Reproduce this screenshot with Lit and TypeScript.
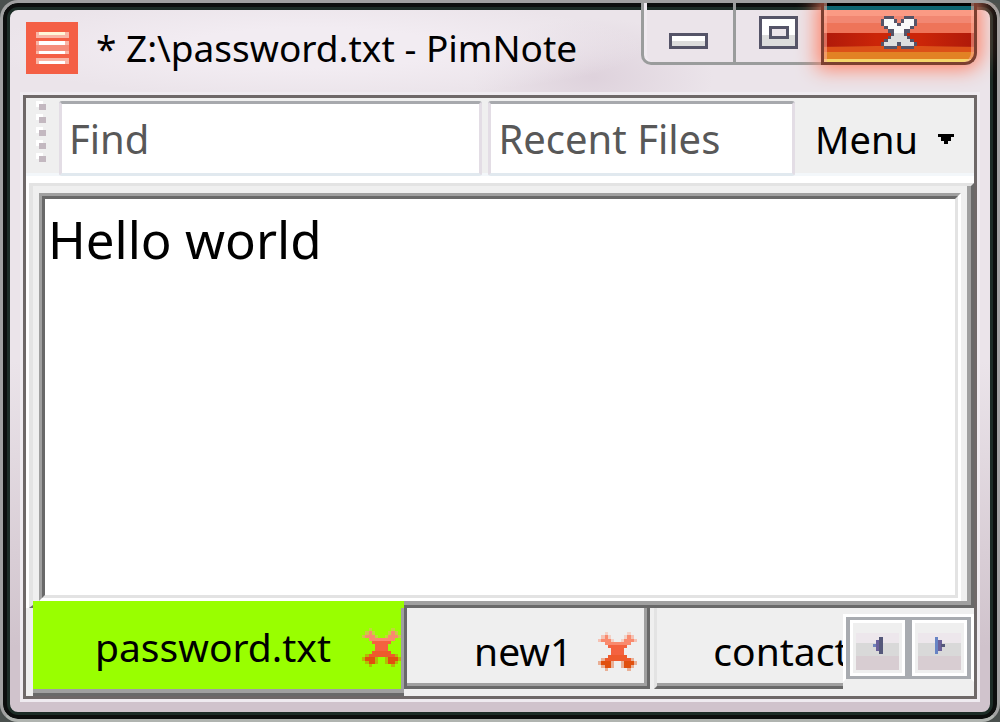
import { LitElement, html, css, svg } from "lit";
import { customElement, state } from "lit/decorators.js";

interface NoteTab {
  name: string;
  label: string;
}

/* Draws a pixel sprite: one character per cell, coloured through the palette. */
const sprite = (rows: string[], palette: Record<string, string>) =>
  rows.flatMap((row, y) =>
    [...row].map((cell, x) =>
      palette[cell] ? svg`<rect x=${x} y=${y} width="1" height="1" fill=${palette[cell]} />` : null,
    ),
  );

const tabCross = [
  "..f......f..",
  ".pPf....fPp.",
  "pPPPf..fPPPp",
  "..PPPPPPPP..",
  "...MMMMMM...",
  "....MMMM....",
  "....MMMM....",
  "...NNNNNN...",
  ".oNNNNNNNNo.",
  "oOOOo..oOOOo",
  ".oOOo..oOOo.",
  "..o......o..",
];
const tabCrossColours = {
  f: "#f9a68966",
  p: "#f99a8088",
  P: "#f98a6e",
  M: "#f4623f",
  N: "#ee5a2c",
  O: "#e0500f",
  o: "#e0501066",
};

const closeCross = [
  ".KKK...KKK.",
  "KWWWK.KWWWK",
  "KWWWWKWWWWK",
  ".KWWWWWWWK.",
  "..KKWWWKK..",
  "...KVVVK...",
  "..KVVVVVK..",
  ".KVVVVVVVK.",
  "KVVVVKVVVVK",
  ".KKKK.KKKK.",
];
const closeCrossColours = { K: "#555468", W: "#fafafa", V: "#dedede" };

@customElement("app-root")
export class AppRoot extends LitElement {
  @state() private active = 0;
  @state() private tabs: NoteTab[] = [
    { name: "password", label: "password.txt" },
    { name: "new1", label: "new1" },
    { name: "contact", label: "contact" },
  ];

  static styles = css`
    :host {
      display: block;
      background: #4a504e;
      font-family: "Noto Sans", "Open Sans", sans-serif;
      color: #000;
    }
    * {
      box-sizing: border-box;
    }
    button,
    input,
    textarea {
      font: inherit;
      color: inherit;
      border: 0;
      margin: 0;
      padding: 0;
      border-radius: 0;
      background: none;
      outline: none;
    }
    svg {
      display: block;
      flex: none;
    }
    .window {
      display: flex;
      flex-direction: column;
      height: 100vh;
      border: 3px solid #a0a0a0;
      border-bottom-color: #b0b4b0;
      border-radius: 18px;
      padding: 0 17px 16px;
      background:
        radial-gradient(ellipse 330px 50px at 310px 45px, #f2ecf2 0 40%, transparent 100%),
        radial-gradient(ellipse 120px 60px at 590px 75px, #ded2dc, transparent),
        linear-gradient(#ebe4ea 0 50%, #d0c3cc 90%);
      box-shadow: inset 0 0 0 4px #0c0e0d, inset 0 0 0 7px #1c2c26;
    }
    .titlebar {
      display: flex;
      align-items: flex-start;
      height: 88px;
      flex: none;
      padding-right: 3px;
    }
    .caption {
      display: flex;
      align-items: center;
      gap: 18px;
      flex: 1;
      min-width: 0;
      height: 90px;
      padding-left: 6px;
    }
    .title {
      margin: 0;
      font-size: 37px;
      line-height: 52px;
      font-weight: 400;
      white-space: nowrap;
    }
    .controls {
      display: flex;
      height: 62px;
    }
    .control {
      display: flex;
      justify-content: center;
      width: 92px;
      border: solid #9a9c9c;
      border-width: 0 0 3px 3px;
      box-shadow: inset 3px 0 #f0eaf0;
      background: linear-gradient(#0c0e0d 0 4px, #1c2c26 4px 7px, #ebe4ea 7px);
    }
    .control.min {
      border-radius: 0 0 0 10px;
      padding-top: 30px;
    }
    .control.max {
      width: 88px;
      padding-top: 13px;
      box-shadow: none;
    }
    .control.close {
      position: relative;
      width: 156px;
      border: 3px solid #7c3f30;
      border-top: 0;
      border-radius: 0 0 12px 0;
      padding-top: 13px;
      background:
        linear-gradient(90deg, #a8160acc, transparent 35% 65%, #a8160acc) 0 30px / 100% 14px no-repeat,
        linear-gradient(#000 0 3px, #0c6470 3px 7px, #fb9a84 7px 13px, #f28772 13px 20px, #ee7459 20px 30px, #cb2508 30px 43px, #dc5018 43px 49px, #e28224 49px 56px, #f4d46a 56px);
      box-shadow: inset 3px 0 #ffb4a288, inset -3px 0 #ffb4a288, 0 0 20px 4px #ff8064;
      clip-path: inset(0 -30px -30px -30px);
    }
    .client {
      display: flex;
      flex-direction: column;
      flex: 1;
      min-height: 0;
      border: 3px solid #6e6868;
      outline: 3px solid #efebf0;
      margin: 4px 3px;
      background: #efefef;
    }
    .toolbar {
      display: flex;
      align-items: stretch;
      height: 78px;
      flex: none;
      padding-top: 3px;
      box-shadow: inset 0 -3px #f3f7fa;
    }
    .grip {
      display: flex;
      flex-direction: column;
      gap: 7px;
      width: 33px;
      padding-left: 13px;
      padding-top: 3px;
    }
    .dot {
      width: 7px;
      height: 6px;
      background: #c3b8c0;
      box-shadow: -3px -3px #fff;
    }
    .field {
      height: 75px;
      padding: 0 0 0 7px;
      min-width: 0;
      font-size: 40px;
      border: 3px solid #e3dde5;
      border-top-color: #a7a9ad;
      border-bottom-color: #e1e9ef;
      border-radius: 3px;
      background: #fff;
    }
    .field::placeholder {
      color: #585858;
      opacity: 1;
    }
    .find {
      flex: 425;
      margin-right: 6px;
    }
    .recent {
      flex: 304;
    }
    .menu {
      display: flex;
      align-items: center;
      gap: 20px;
      flex: none;
      width: 179px;
      padding-left: 20px;
      font-size: 38px;
    }
    .pane {
      display: flex;
      flex: 1;
      min-height: 0;
      border: solid #e3e3e3;
      border-width: 3px 3px 3px 4px;
      border-right-color: #696969;
      border-bottom-color: #696969;
      margin-left: 3px;
      margin-top: 7px;
      padding: 7px 10px 4px 6px;
      box-shadow: 0 -7px #fff, -3px 0 #fff, -3px -7px #fff, inset -4px -4px #a0a0a0;
    }
    .bevel {
      display: flex;
      flex: 1;
      border: 3px solid #a0a0a0;
      border-right-color: #fff;
      border-bottom-color: #fff;
    }
    .text {
      flex: 1;
      resize: none;
      border: 3px solid #696969;
      border-right-color: #e3e3e3;
      border-bottom-color: #e3e3e3;
      background: #fff;
      padding: 4px 3px;
      font-size: 51px;
      line-height: 72px;
      overflow: hidden;
    }
    .tabs {
      display: flex;
      flex: none;
      height: 88px;
      padding-left: 7px;
    }
    .strip {
      display: flex;
      align-items: flex-start;
      flex: 1;
      min-width: 0;
      height: 95px;
      margin-top: -7px;
      padding-top: 7px;
      overflow: hidden;
    }
    .tab {
      display: flex;
      align-items: center;
      flex: none;
      height: 81px;
      font-size: 39px;
      line-height: 54px;
      padding: 8px 10px 0 67px;
      border: solid #696969;
      border-width: 0 3px 3px;
      box-shadow: inset -3px -3px #a0a0a0, -3px 0 #a0a0a0;
      margin-right: 7px;
      gap: 26px;
    }
    .tab:nth-child(n + 3) {
      border-left-color: #e3e3e3;
      padding-left: 56px;
      margin-left: -3px;
      box-shadow: inset -3px -3px #a0a0a0;
    }
    .tab.active {
      height: 95px;
      margin-top: -7px;
      border-width: 0 0 3px;
      background: #9f0;
      padding: 0 3px 0 62px;
      gap: 31px;
      margin-right: 0;
      box-shadow: inset 0 -4px #a0a0a0;
    }
    .scroll {
      display: flex;
      flex: none;
      gap: 7px;
      height: 68px;
      margin-top: 6px;
      padding: 3px 4px;
      background: #a8abb0;
      border: 3px solid #fff;
      border-bottom-color: #efefef;
    }
    .arrow {
      display: flex;
      justify-content: center;
      width: 55px;
      height: 56px;
      padding-top: 14px;
      border: 3px solid #fff;
      box-shadow: inset 0 0 0 3px #efefef;
      background: linear-gradient(#efefef 0 10px, #ede7ec 10px 20px, #d9d9d9 20px 33px, #d8cdd2 33px);
    }
  `;

  private renderTab(tab: NoteTab, index: number) {
    return html`<div class="tab ${index === this.active ? "active" : ""}">
      <button role="tab" aria-selected=${index === this.active} @click=${() => (this.active = index)}>${tab.label}</button>
      <button class="shut" aria-label="Close ${tab.name}">
        <svg width="39" height="39" viewBox="0 0 12 12" shape-rendering="crispEdges">${sprite(tabCross, tabCrossColours)}</svg>
      </button>
    </div>`;
  }

  render() {
    return html`<main class="window">
      <header class="titlebar">
        <div class="caption">
          <svg width="52" height="52" viewBox="0 0 52 52" shape-rendering="crispEdges">
            <path fill="#f45f45" d="M0 0h52v52H0z" />
            <path fill="#f9b5a6" d="M10 10h33v6H10zM10 19h33v4H10zM10 29h33v3H10zM10 36h33v6H10z" />
            <path fill="#f58d7b" d="M10 23h33v6H10z" />
            <path fill="#fff6d8" d="M13 10h26v3H13z" />
            <path fill="#fff" d="M13 19h26v4H13zM13 29h26v3H13zM13 39h26v3H13z" />
          </svg>
          <h1 class="title">* Z:\\password.txt - PimNote</h1>
        </div>
        <div class="controls">
          <button class="control min" aria-label="Minimize">
            <svg width="39" height="16" viewBox="0 0 39 16"><path fill="#fff" d="M2 2h35v6H2z" /><path fill="#dcdcdc" d="M2 8h35v6H2z" /><path fill="none" stroke="#555468" stroke-width="3" d="M1.5 1.5h36v13h-36z" /></svg>
          </button>
          <button class="control max" aria-label="Maximize">
            <svg width="39" height="33" viewBox="0 0 39 33"><path fill="#fff" d="M2 2h35v17H2z" /><path fill="#dcdcdc" d="M2 19h35v12H2z" /><path fill="none" stroke="#555468" stroke-width="3" d="M1.500 1.500h36v30h-36z" /><path fill="#ebe4ea" stroke="#555468" stroke-width="3" d="M11.500 11.500h17v10h-17z" /></svg>
          </button>
          <button class="control close" aria-label="Close">
            <svg width="36" height="33" viewBox="0 0 11 10" preserveAspectRatio="none" shape-rendering="crispEdges">${sprite(closeCross, closeCrossColours)}</svg>
          </button>
        </div>
      </header>
      <section class="client">
        <div class="toolbar">
          <div class="grip"><i class="dot"></i><i class="dot"></i><i class="dot"></i><i class="dot"></i><i class="dot"></i></div>
          <input class="field find" aria-label="Find" placeholder="Find" />
          <input class="field recent" aria-label="Recent Files" placeholder="Recent Files" />
          <button class="menu">Menu
            <svg width="16" height="10" viewBox="0 0 16 10" shape-rendering="crispEdges"><path d="M0 0h16v3h-3v4h-3v3H6V7H3V3H0z" /></svg>
          </button>
        </div>
        <div class="pane">
          <div class="bevel"><textarea class="text" aria-label="Note" spellcheck="false" .value=${"Hello world"}></textarea></div>
        </div>
        <nav class="tabs">
          <div class="strip" role="tablist">${this.tabs.map((tab, i) => this.renderTab(tab, i))}</div>
          <div class="scroll">
            <button class="arrow" aria-label="Previous tabs">
              <svg width="10" height="17" viewBox="0 0 10 17" shape-rendering="crispEdges"><path fill="#7084bc" d="M0 7h3v3H0z" /><path fill="#6a609a" d="M3 3h4v11H3z" /><path fill="#55587a" d="M6 0h4v17H6z" /></svg>
            </button>
            <button class="arrow" aria-label="Next tabs">
              <svg width="10" height="17" viewBox="0 0 10 17" shape-rendering="crispEdges"><path fill="#6884c4" d="M0 0h3v17H0z" /><path fill="#6a609a" d="M3 3h4v11H3z" /><path fill="#55587a" d="M6 7h4v3H6z" /></svg>
            </button>
          </div>
        </nav>
      </section>
    </main>`;
  }
}
